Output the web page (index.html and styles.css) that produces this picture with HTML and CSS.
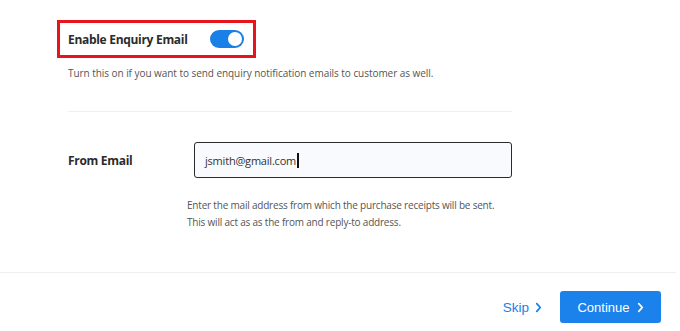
FILE: index.html
```html
<!DOCTYPE html>
<html lang="en">
<head>
<meta charset="utf-8">
<title>Enquiry Email Settings</title>
<link rel="stylesheet" href="styles.css">
</head>
<body>
<div class="page">
  <section class="content">
    <div class="highlight">
      <span class="label">Enable Enquiry Email</span>
      <span class="toggle"><span class="knob"></span></span>
    </div>
    <p class="desc">Turn this on if you want to send enquiry notification emails to customer as well.</p>
    <hr class="divider">
    <div class="field-row">
      <span class="label field-label">From Email</span>
      <div class="input">jsmith@gmail.com<span class="caret"></span></div>
    </div>
    <p class="help">Enter the mail address from which the purchase receipts will be sent.<br>This will act as as the from and reply-to address.</p>
  </section>
  <footer class="footer">
    <a class="skip" href="#">Skip
      <svg class="chev" viewBox="0 0 8 12" width="7" height="11"><path d="M2 1.5 L6 6 L2 10.5" fill="none" stroke="currentColor" stroke-width="2" stroke-linecap="round" stroke-linejoin="round"/></svg>
    </a>
    <button class="continue">Continue
      <svg class="chev" viewBox="0 0 8 12" width="7" height="11"><path d="M2 1.5 L6 6 L2 10.5" fill="none" stroke="currentColor" stroke-width="2" stroke-linecap="round" stroke-linejoin="round"/></svg>
    </button>
  </footer>
</div>
</body>
</html>
```
FILE: styles.css
```css
html, body {
  margin: 0;
  background: #ffffff;
}
body {
  font-family: "Open Sans", "Noto Sans", sans-serif;
  color: #333;
}
.page {
  width: 680px;
  height: 331px;
}
.content {
  padding: 20px 0 0 68px;
  height: 272px;
  box-sizing: border-box;
}
.highlight {
  display: inline-flex;
  align-items: center;
  gap: 22px;
  margin-left: -11px;
  border: 3px solid #e8141c;
  padding: 0 9px 0 8px;
  height: 32px;
}
.label {
  font-size: 12px;
  font-weight: 700;
  color: #2b2b2b;
  letter-spacing: -0.3px;
}
.toggle {
  display: inline-flex;
  align-items: center;
  justify-content: flex-end;
  width: 34px;
  height: 18px;
  border-radius: 9px;
  background: #1a7fe6;
  padding: 0 2px;
  box-sizing: border-box;
}
.knob {
  width: 14px;
  height: 14px;
  border-radius: 50%;
  background: #fff;
}
.desc {
  margin: 7px 0 0;
  font-size: 10px;
  line-height: 16px;
  letter-spacing: -0.05px;
  color: #555;
}
.divider {
  margin: 30px 0 0;
  width: 444px;
  border: 0;
  border-top: 1px solid #f0f0f0;
}
.field-row {
  display: flex;
  align-items: center;
  margin-top: 30px;
}
.field-label {
  width: 126px;
}
.input {
  display: flex;
  align-items: center;
  width: 318px;
  height: 36px;
  box-sizing: border-box;
  border: 1.5px solid #2a2a2a;
  border-radius: 3px;
  background: #f8fafd;
  padding-left: 10px;
  font-size: 11px;
  letter-spacing: -0.2px;
  color: #333;
}
.caret {
  display: inline-block;
  width: 1.5px;
  height: 15px;
  margin-left: 1px;
  background: #111;
}
.help {
  margin: 19px 0 0 119px;
  font-size: 10px;
  line-height: 17px;
  letter-spacing: -0.2px;
  color: #555;
}
.footer {
  border-top: 1px solid #efefef;
  width: 676px;
  display: flex;
  align-items: center;
  justify-content: flex-end;
  gap: 18px;
  padding: 18px 15px 0 0;
  box-sizing: border-box;
}
.skip {
  display: inline-flex;
  align-items: center;
  gap: 6px;
  font-family: "Liberation Sans", Arial, sans-serif;
  font-size: 13.5px;
  color: #1a7fe6;
  text-decoration: none;
}
.continue {
  display: inline-flex;
  align-items: center;
  justify-content: center;
  gap: 7px;
  width: 101px;
  height: 32px;
  border: 0;
  border-radius: 3px;
  background: #1a82ea;
  color: #fff;
  font-family: "Liberation Sans", Arial, sans-serif;
  font-size: 13px;
  padding: 0;
}
.chev {
  display: block;
}
```
